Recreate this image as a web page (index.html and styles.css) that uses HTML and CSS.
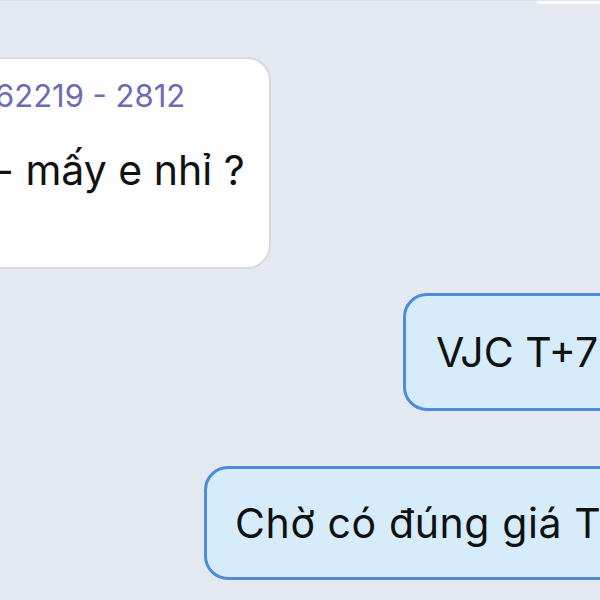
FILE: index.html
```html
<!DOCTYPE html>
<html lang="vi">
<head>
  <meta charset="UTF-8">
  <title>Chat</title>
  <link rel="stylesheet" href="styles.css">
</head>
<body>
  <div class="chat">
    <!-- tail of previous message -->
    <div class="prev-row">
      <div class="prev-bubble"></div>
    </div>

    <!-- incoming -->
    <div class="msg-in">
      <div class="sender">62219 - 2812</div>
      <div class="text">- mấy e nhỉ ?</div>
    </div>

    <!-- outgoing -->
    <div class="msg-out first">
      <div class="text">VJC T+7</div>
    </div>
    <div class="msg-out second">
      <div class="text">Chờ có đúng giá T</div>
    </div>
  </div>
</body>
</html>
```

FILE: styles.css
```css
body {
  margin: 0;
  padding: 0;
  background-color: #e4e8f1;
  font-family: Inter, "Liberation Sans", Arial, sans-serif;
  color: #111;
  overflow: hidden;
  height: 600px;
}

.chat {
  display: flex;
  flex-direction: column;
  width: 600px;
}

.prev-row {
  display: flex;
  justify-content: flex-end;
  height: 3px;
  border-top: 1px solid #dde2ea;
}
.prev-bubble {
  width: 63px;
  height: 3px;
  background-color: #fff;
  border-bottom-left-radius: 4px;
}

.text {
  font-size: 41px;
  line-height: 52px;
  white-space: nowrap;
}

.msg-in {
  box-sizing: border-box;
  margin-top: 53px;
  margin-left: -200px;
  width: 471px;
  height: 212px;
  padding: 18px 0 0 193px;
  background-color: #fefefe;
  border: 2px solid #d8dadf;
  border-radius: 24px;
}
.sender {
  font-size: 31px;
  line-height: 38px;
  color: #6d6bb1;
  white-space: nowrap;
}
.msg-in .text {
  margin-top: 29px;
}

.msg-out {
  background-color: #d7ecfb;
  border: 3px solid #4f8bd7;
  border-radius: 24px;
  margin-right: -40px;
}
.msg-out.first {
  margin-top: 24px;
  margin-left: 403px;
  padding: 30px 0 30px 30px;
}
.msg-out.second {
  margin-top: 55px;
  margin-left: 204px;
  padding: 28px 0 28px 28px;
}
.msg-out.second .text {
  letter-spacing: 0.6px;
}
```
